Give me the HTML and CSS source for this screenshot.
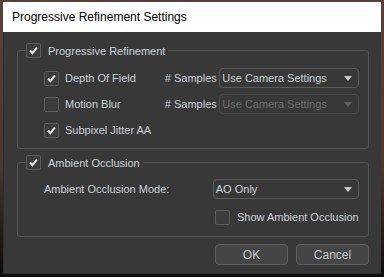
FILE: index.html
```html
<!DOCTYPE html>
<html lang="en">
<head>
    <meta charset="UTF-8">
    <title>Progressive Refinement Settings</title>
    <link rel="stylesheet" href="styles.css">
</head>
<body>
    <div class="dialog">
        <div class="title-bar">Progressive Refinement Settings</div>
        <div class="dialog-body">
            <!-- Grupo 1: refinamiento progresivo -->
            <fieldset class="group">
                <legend class="group-legend">
                    <span class="check checked"><svg viewBox="0 0 15 15"><path d="M3.5 7.5 L6.2 10.5 L11.5 4"/></svg></span>
                    <span>Progressive Refinement</span>
                </legend>
                <div class="group-content">
                    <div class="row">
                        <div class="option">
                            <span class="check checked"><svg viewBox="0 0 15 15"><path d="M3.5 7.5 L6.2 10.5 L11.5 4"/></svg></span>
                            <span>Depth Of Field</span>
                        </div>
                        <span class="samples">&#35; Samples</span>
                        <div class="combo samples-combo">
                            <span>Use Camera Settings</span>
                            <span class="arrow"></span>
                        </div>
                    </div>
                    <div class="row">
                        <div class="option">
                            <span class="check"></span>
                            <span>Motion Blur</span>
                        </div>
                        <span class="samples">&#35; Samples</span>
                        <div class="combo samples-combo disabled">
                            <span>Use Camera Settings</span>
                            <span class="arrow"></span>
                        </div>
                    </div>
                    <div class="row">
                        <div class="option">
                            <span class="check checked"><svg viewBox="0 0 15 15"><path d="M3.5 7.5 L6.2 10.5 L11.5 4"/></svg></span>
                            <span>Subpixel Jitter AA</span>
                        </div>
                    </div>
                </div>
            </fieldset>

            <!-- Grupo 2: oclusion ambiental -->
            <fieldset class="group group-ao">
                <legend class="group-legend">
                    <span class="check checked"><svg viewBox="0 0 15 15"><path d="M3.5 7.5 L6.2 10.5 L11.5 4"/></svg></span>
                    <span>Ambient Occlusion</span>
                </legend>
                <div class="group-content">
                    <div class="row">
                        <span class="mode-label">Ambient Occlusion Mode:</span>
                        <div class="combo mode-combo">
                            <span>AO Only</span>
                            <span class="arrow"></span>
                        </div>
                    </div>
                    <div class="row">
                        <span class="mode-label"></span>
                        <div class="option">
                            <span class="check"></span>
                            <span>Show Ambient Occlusion</span>
                        </div>
                    </div>
                </div>
            </fieldset>

            <div class="buttons">
                <button type="button">OK</button>
                <button type="button">Cancel</button>
            </div>
        </div>
    </div>
</body>
</html>
```

FILE: styles.css
```css
body {
    margin: 0;
    height: 277px;
    overflow: hidden;
    background: linear-gradient(180deg, #5a4038 0%, #4c362f 60%, #1a1614 90%, #0c0b0b 100%);
    font-family: 'Liberation Sans', Arial, sans-serif;
    font-size: 11px;
    color: #cdd3da;
}

.dialog {
    margin: 2px 3px 0 3px;
    width: 378px;
    background-color: #383838;
}

.title-bar {
    height: 30px;
    line-height: 30px;
    background-color: #fff;
    color: #000;
    font-size: 12px;
    padding-left: 9px;
}

.dialog-body {
    height: 242px;
    padding: 11px 12px 0 13px;
    box-sizing: border-box;
    border-left: 1px solid #2e2e2e;
    border-bottom: 1px solid #2e2e2e;
}

.group {
    margin: 0 0 6px 0;
    padding: 0;
    border: 1px solid #555;
    border-radius: 3px;
    min-width: 0;
}

.group-legend {
    display: flex;
    align-items: center;
    gap: 7px;
    margin-left: 8px;
    padding: 0 3px 0 0;
}

.group-content {
    padding: 10px 9px 8px 26px;
}

.group-ao .group-content {
    padding: 9px 9px 9px 25px;
}

.row {
    display: flex;
    align-items: center;
    height: 20px;
    margin-bottom: 6px;
}

.row:last-child {
    margin-bottom: 0;
}

.group-ao .row {
    margin-bottom: 8px;
}

.group-ao .row:last-child {
    margin-bottom: 0;
}

.option {
    display: flex;
    align-items: center;
    gap: 6px;
    width: 122px;
    white-space: nowrap;
}

.group-ao .option {
    gap: 7px;
}

.check {
    width: 13px;
    height: 13px;
    border: 1px solid #5e5e5e;
    border-radius: 2px;
    background-color: #3c3c3c;
    flex-shrink: 0;
}

.check svg {
    display: block;
    width: 13px;
    height: 13px;
}

.check path {
    fill: none;
    stroke: #e4e6e8;
    stroke-width: 2.4;
}

.samples {
    width: 55px;
}

.combo {
    display: flex;
    align-items: center;
    justify-content: space-between;
    height: 18px;
    border: 1px solid #5a5a5a;
    border-radius: 4px;
    padding: 0 6px 0 2px;
    box-sizing: content-box;
}

.samples-combo {
    width: 131px;
}

.combo.disabled {
    color: #6e6e6e;
    border-color: #4a4a4a;
}

.arrow {
    width: 0;
    height: 0;
    border-left: 4px solid transparent;
    border-right: 4px solid transparent;
    border-top: 5px solid #c8ccd0;
}

.combo.disabled .arrow {
    border-top-color: #606060;
}

.mode-label {
    width: 171px;
    margin-left: 1px;
}

.mode-combo {
    width: 138px;
}

.buttons {
    display: flex;
    justify-content: flex-end;
    gap: 8px;
    margin-top: 7px;
}

.buttons button {
    width: 73px;
    height: 21px;
    background-color: #454545;
    border: 1px solid #5e5e5e;
    border-radius: 4px;
    color: #c4c8cc;
    font-family: 'Liberation Sans', Arial, sans-serif;
    font-size: 12px;
    padding: 0;
}
```
